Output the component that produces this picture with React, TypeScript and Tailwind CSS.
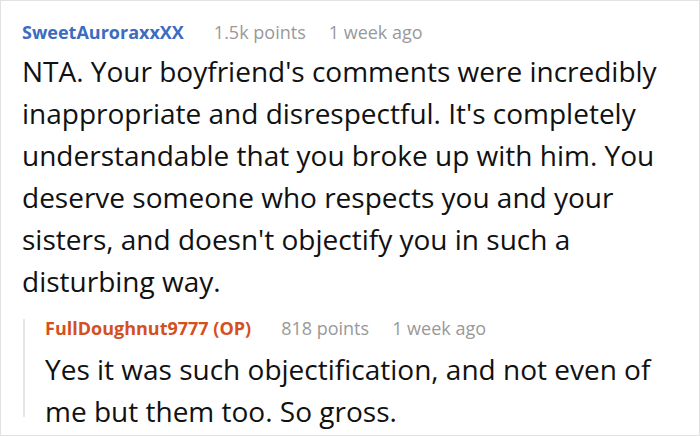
export default function App() {
  return (
    <div className="w-[700px] h-[436px] border border-[#e2e2e2] bg-white overflow-hidden" style={{ fontFamily: '"Open Sans", sans-serif' }}>
      <div className="pl-[21px] pt-[19px] pr-[14px]">
        <div className="flex items-center h-[24px] text-[18px] whitespace-nowrap">
          <span className="font-bold text-[#3b6cbf]">SweetAuroraxxXX</span>
          <span className="ml-[30px] text-[#999999]">1.5k points</span>
          <span className="ml-[23px] text-[#999999]">1 week ago</span>
        </div>
        <p className="mt-[6px] text-[28px] leading-[42px] text-[#111111]">
          NTA. Your boyfriend's comments were incredibly inappropriate and disrespectful. It's completely understandable that you broke up with him. You deserve someone who respects you and your sisters, and doesn't objectify you in such a disturbing way.
        </p>
        <div className="mt-[14px] flex">
          <div className="w-[2px] shrink-0 bg-[#e6e6e6] mt-[3px] mb-[15px] ml-[1px]" />
          <div className="pl-[20px]">
            <div className="flex items-center h-[24px] text-[18px] whitespace-nowrap">
              <span className="font-bold text-[#d4501e]">FullDoughnut9777 (OP)</span>
              <span className="ml-[30px] text-[#999999]">818 points</span>
              <span className="ml-[23px] text-[#999999]">1 week ago</span>
            </div>
            <p className="mt-[8px] text-[28px] leading-[42px] text-[#111111]">
              Yes it was such objectification, and not even of me but them too. So gross.
            </p>
          </div>
        </div>
      </div>
    </div>
  );
}
